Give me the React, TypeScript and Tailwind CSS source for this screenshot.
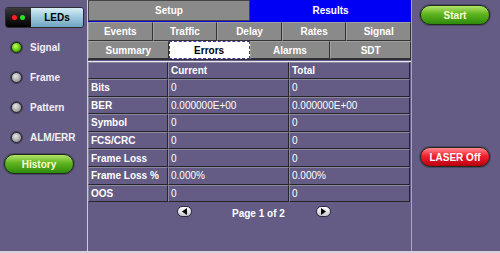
import type { ReactNode } from 'react'

type LedProps = {
  label: string
  lit?: boolean
}

const Led = ({ label, lit = false }: LedProps) => (
  <div className="flex h-[30px] items-center gap-[8px] pl-[11px]">
    <span
      className={
        lit
          ? 'h-[11px] w-[11px] rounded-full border border-[#1e2a10] bg-[radial-gradient(circle_at_40%_35%,#c8ff60,#5cc80c_55%,#2c6a04)] shadow-[0_0_0_1px_#3d3a52]'
          : 'h-[11px] w-[11px] rounded-full border border-[#2a2838] bg-[radial-gradient(circle_at_40%_35%,#e6e6e6,#a8a8a8_60%,#6e6e6e)] shadow-[0_0_0_1px_#3d3a52]'
      }
    />
    <span className="text-[10px] font-bold text-[#f2f0f8]">{label}</span>
  </div>
)

type PillProps = {
  children: ReactNode
  tone: 'green' | 'red'
  className?: string
}

const Pill = ({ children, tone, className = '' }: PillProps) => (
  <div
    className={`flex h-[20px] w-[70px] items-center justify-center rounded-full border border-[#1f2a18] text-[10px] font-bold shadow-[0_0_0_1px_#4b4766] ${
      tone === 'green'
        ? 'bg-[linear-gradient(#b4e46a,#5fb41e_45%,#2f8a0c)] text-[#fbffd8]'
        : 'bg-[linear-gradient(#ff8a92,#f0202e_45%,#b80010)] text-white'
    } ${className}`}
  >
    {children}
  </div>
)

const Tab = ({ label, active = false }: { label: string; active?: boolean }) => (
  <div
    className={
      active
        ? 'flex flex-1 items-center justify-center border border-dashed border-[#3a3a9a] bg-white text-[10px] font-bold text-black'
        : 'flex flex-1 items-center justify-center border border-t-[#a0a0a0] border-l-[#a0a0a0] border-b-[#333] border-r-[#333] bg-[#8a8a8a] text-[10px] font-bold text-white'
    }
  >
    {label}
  </div>
)

const rows: [string, string, string][] = [
  ['Bits', '0', '0'],
  ['BER', '0.000000E+00', '0.000000E+00'],
  ['Symbol', '0', '0'],
  ['FCS/CRC', '0', '0'],
  ['Frame Loss', '0', '0'],
  ['Frame Loss %', '0.000%', '0.000%'],
  ['OOS', '0', '0'],
]

const cell =
  'flex items-center border border-t-[#8b879c] border-l-[#8b879c] border-b-[#26252c] border-r-[#26252c] bg-[#645c84] px-[2px] text-[10px] text-white'

const Arrow = ({ dir }: { dir: 'left' | 'right' }) => (
  <span className="flex h-[11px] w-[15px] items-center justify-center rounded-full border border-[#2a2838] bg-[linear-gradient(#ffffff,#c8c8d0)]">
    <svg width="6" height="7" viewBox="0 0 6 7">
      {dir === 'left' ? <path d="M5 0 L0 3.5 L5 7 Z" fill="#000" /> : <path d="M1 0 L6 3.5 L1 7 Z" fill="#000" />}
    </svg>
  </span>
)

const App = () => {
  return (
    <div
      className="flex h-[253px] w-[500px] overflow-hidden border-b-[2px] border-[#d4d2dc] bg-[#645c84]"
      style={{ fontFamily: '"Liberation Sans", Arial, sans-serif' }}
    >
      {/* left panel */}
      <div className="flex w-[88px] shrink-0 flex-col border-r border-[#cfcbe2] pt-[7px]">
        <div className="ml-[5px] flex h-[21px] w-[79px] overflow-hidden rounded-[3px] border border-[#2a2a34]">
          <div className="flex w-[25px] items-center justify-center gap-[3px] bg-[linear-gradient(#3a3a3a,#000)]">
            <span className="h-[5px] w-[5px] rounded-full bg-[#ff2020]" />
            <span className="h-[5px] w-[5px] rounded-full bg-[#30e030]" />
          </div>
          <div className="flex flex-1 items-center justify-center bg-[linear-gradient(#d8eef6,#9cc8dc_50%,#6fa6c0)] text-[10px] font-bold text-black">
            LEDs
          </div>
        </div>
        <div className="mt-[4px] flex flex-col">
          <Led label="Signal" lit />
          <Led label="Frame" />
          <Led label="Pattern" />
          <Led label="ALM/ERR" />
        </div>
        <Pill tone="green" className="ml-[4px] mt-[2px]">
          History
        </Pill>
      </div>

      {/* main */}
      <div className="flex w-[323px] shrink-0 flex-col">
        <div className="flex h-[22px] border-b border-[#0000e0]">
          <div className="flex w-[162px] items-center justify-center border border-[#444] bg-[#8a8a8a] text-[10px] font-bold text-white">
            Setup
          </div>
          <div className="flex flex-1 items-center justify-center bg-[#0000f4] text-[10px] font-bold text-white">
            Results
          </div>
        </div>
        <div className="flex h-[19px]">
          {['Events', 'Traffic', 'Delay', 'Rates', 'Signal'].map((t) => (
            <Tab key={t} label={t} />
          ))}
        </div>
        <div className="flex h-[19px] border-b border-[#2e2c36]">
          <Tab label="Summary" />
          <Tab label="Errors" active />
          <Tab label="Alarms" />
          <Tab label="SDT" />
        </div>
        <div className="mt-[1px] border-t border-[#e8e6f0] pr-[1px]">
          <div className="flex h-[17px]">
            <div className={`${cell} w-[80px]`} />
            <div className={`${cell} w-[121px] border-l-[#8a7a40] font-bold`}>Current</div>
            <div className={`${cell} flex-1 font-bold`}>Total</div>
          </div>
          {rows.map(([label, cur, tot]) => (
            <div key={label} className="flex h-[17.6px]">
              <div className={`${cell} w-[80px] font-bold`}>{label}</div>
              <div className={`${cell} w-[121px] border-l-[#8a7a40]`}>{cur}</div>
              <div className={`${cell} flex-1 border-l-[#8a7a40]`}>{tot}</div>
            </div>
          ))}
        </div>
        <div className="mt-[2px] flex h-[14px] items-center">
          <span className="ml-[89px]">
            <Arrow dir="left" />
          </span>
          <span className="ml-[40px] mt-[5px] text-[10px] font-bold text-white">Page 1 of 2</span>
          <span className="ml-[31px]">
            <Arrow dir="right" />
          </span>
        </div>
      </div>

      {/* right panel */}
      <div className="flex flex-1 flex-col border-l border-[#a8a6b8] pl-[8px] pt-[5px]">
        <Pill tone="green">Start</Pill>
        <Pill tone="red" className="mt-[122px]">
          LASER Off
        </Pill>
      </div>
    </div>
  )
}

export default App
